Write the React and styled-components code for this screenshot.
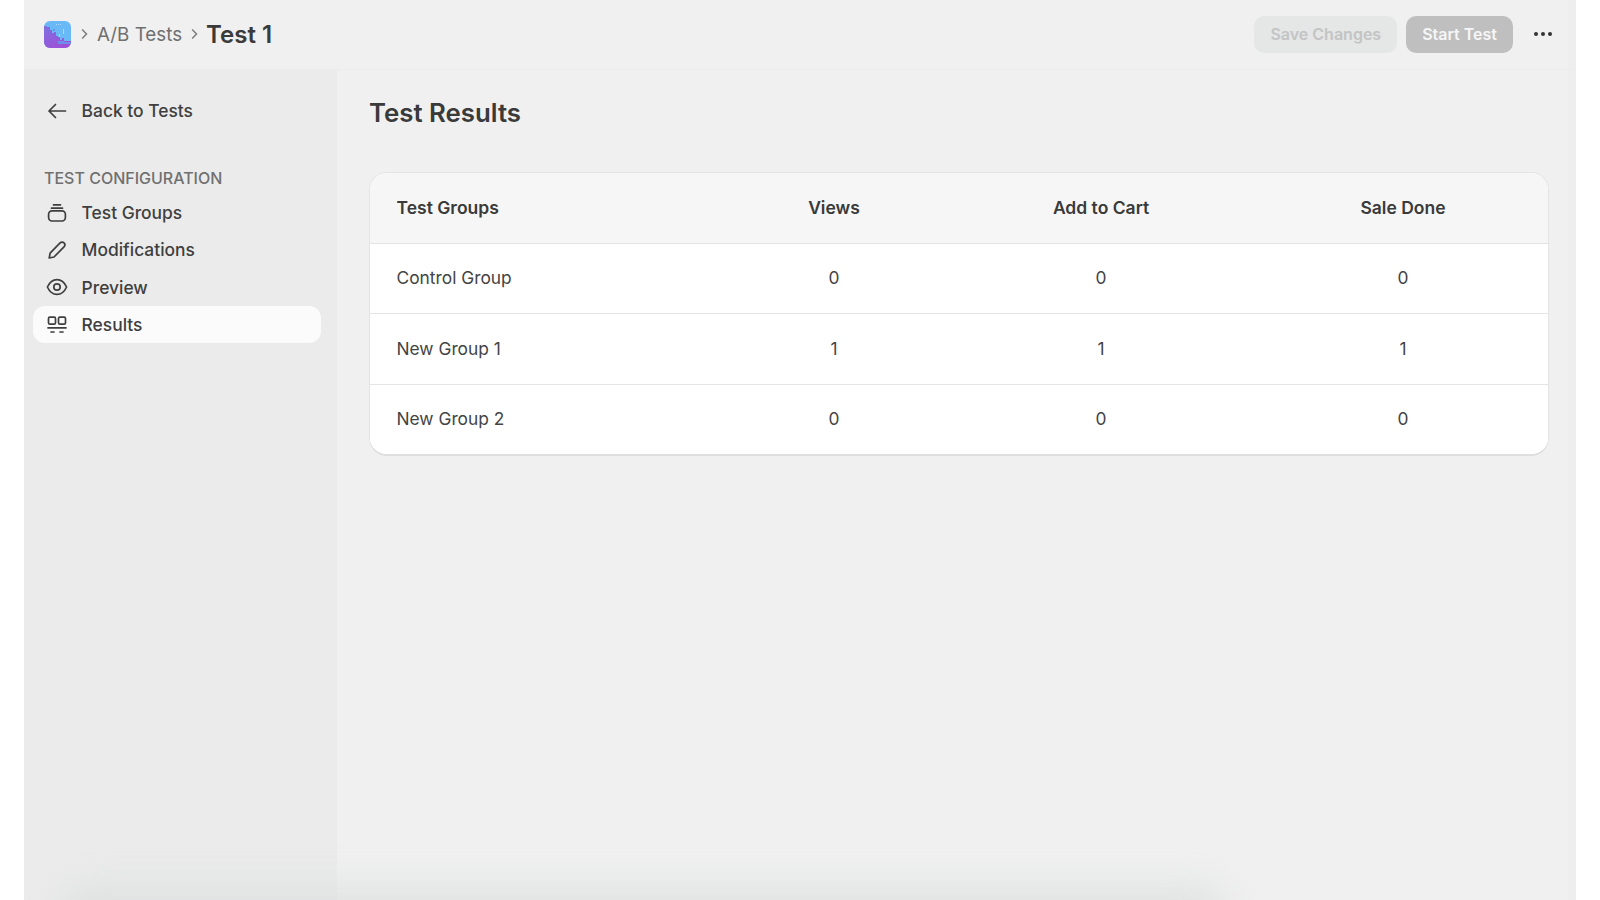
import React from 'react'
import styled, { createGlobalStyle } from 'styled-components'

const GlobalStyle = createGlobalStyle`
  html, body {
    margin: 0;
    background: #ffffff;
    font-family: Inter, "Liberation Sans", sans-serif;
    color: #3a3a3a;
  }
`

const Page = styled.div`
  position: relative;
  box-sizing: border-box;
  width: 1552px;
  height: 900px;
  margin-left: 24px;
  background: #f0f0f0;
  overflow: hidden;
  display: flex;
  flex-direction: column;
`

const TopBar = styled.header`
  box-sizing: border-box;
  height: 70px;
  flex: none;
  display: flex;
  align-items: center;
  padding: 0 23px 1px 20px;
  border-bottom: 1px solid #ebebeb;
`

const Crumbs = styled.nav`
  display: flex;
  align-items: center;
  flex: 1;
`

const Separator = styled.span`
  display: flex;
  margin: ${p => (p.$tight ? '0 8px 0 9px' : '0 9px 0 10px')};
`

const CrumbLink = styled.span`
  font-size: 18.8px;
  color: #6f6f6f;
`

const CrumbTitle = styled.h1`
  font-size: 24px;
  font-weight: 600;
  margin: 0;
  color: #3a3a3a;
`

const Actions = styled.div`
  display: flex;
  align-items: center;
  gap: 9px;
`

const ActionButton = styled.button`
  height: 37px;
  padding: 0 16px;
  border: none;
  border-radius: 10px;
  font-family: inherit;
  font-size: 16px;
  font-weight: 600;
  background: ${p => (p.$primary ? '#bfbfbf' : '#e5e6e6')};
  color: ${p => (p.$primary ? '#f6f6f6' : '#c3c4c4')};
`

const MoreButton = styled.div`
  display: flex;
  align-items: center;
  margin-left: 11px;
`

const Body = styled.div`
  flex: 1;
  display: flex;
  min-height: 0;
`

const Sidebar = styled.aside`
  box-sizing: border-box;
  width: 313px;
  flex: none;
  background: #ebebeb;
  padding: 22px 16px 0 9px;
`

const SideRow = styled.div`
  display: flex;
  align-items: center;
  gap: 12.6px;
  height: 37px;
  padding-left: 12px;
  border-radius: 12px;
  font-size: 17.4px;
  font-weight: 500;
  color: #3f3f3f;
  background: ${p => (p.$active ? '#fbfbfb' : 'transparent')};
  margin-bottom: ${p => (p.$back ? '39px' : '0.4px')};
`

const SideLabel = styled.div`
  font-size: 16px;
  font-weight: 500;
  color: #707070;
  padding-left: 11px;
  margin-bottom: 6px;
  line-height: 20px;
`

const IconBox = styled.span`
  width: 24px;
  height: 24px;
  flex: none;
  display: flex;
  align-items: center;
  justify-content: center;
`

const Main = styled.main`
  flex: 1;
  padding: 25px 27px 0 32px;
`

const Heading = styled.h2`
  font-size: 25.8px;
  font-weight: 600;
  line-height: 36px;
  margin: 0 0 41px;
  color: #3a3a3a;
`

const Card = styled.section`
  border: 1px solid #e4e4e4;
  border-bottom: 2px solid #dedede;
  border-radius: 18px;
  background: #ffffff;
  overflow: hidden;
`

const Row = styled.div`
  display: grid;
  grid-template-columns: 354px 220px 314px 1fr;
  align-items: center;
  height: 68.5px;
  padding-bottom: 1px;
  font-size: ${p => (p.$head ? '17.5px' : '17.35px')};
  font-weight: ${p => (p.$head ? 600 : 400)};
  color: ${p => (p.$head ? '#3a3a3a' : '#444444')};
  background: ${p => (p.$head ? '#f6f6f6' : '#ffffff')};
  border-bottom: ${p => (p.$last ? 'none' : '1px solid #e4e4e4')};
`

const NameCell = styled.div`
  padding-left: 26.5px;
`

const Cell = styled.div`
  text-align: center;
`

const EdgeShade = styled.div`
  position: absolute;
  top: 0;
  right: 0;
  bottom: 0;
  width: 8px;
  background: #ececec;
  opacity: 0.6;
`

const BottomShade = styled.div`
  position: absolute;
  left: 35px;
  width: 1170px;
  bottom: -34px;
  height: 46px;
  border-radius: 30px;
  background: #d8dcdc;
  filter: blur(20px);
  opacity: 0.75;
`

const Logo = () => (
  <svg width="27" height="27" viewBox="0 0 27 27">
    <defs>
      <linearGradient id="logoPurple" x1="0" y1="0" x2="0.7" y2="1">
        <stop offset="0" stopColor="#7d70e0" />
        <stop offset="1" stopColor="#a04fd6" />
      </linearGradient>
      <clipPath id="logoClip">
        <rect width="27" height="27" rx="6" />
      </clipPath>
    </defs>
    <g clipPath="url(#logoClip)">
      <rect width="27" height="27" fill="#69b9f6" />
      <path
        d="M0 5h3v1h3v3h2v3h2v-1h2v4h2v1h2v3h2v-2h2v3h7v7H0z"
        fill="url(#logoPurple)"
      />
      <path d="M14 20h6v1h7v2H14zM9 8h2v2H9z" fill="#6e8fe8" />
      <path d="M12 3h1v1h-1zM14 3h1v1h-1zM16 3h1v1h-1zM19 8h1v5h-1zM15 13h1v3h-1z" fill="#a9d6fa" />
    </g>
  </svg>
)

const Chevron = () => (
  <svg width="7" height="12" viewBox="0 0 7 12" fill="none">
    <path d="M1.2 1.5 5.5 6l-4.3 4.5" stroke="#7c7c7c" strokeWidth="1.5" />
  </svg>
)

const Stroke = ({ children }) => (
  <svg width="22" height="22" viewBox="0 0 22 22" fill="none" stroke="#3f3f3f" strokeWidth="1.7" strokeLinecap="round" strokeLinejoin="round">
    {children}
  </svg>
)

const BackIcon = () => (
  <Stroke>
    <path d="M19.5 11H3M9.5 4.5 3 11l6.5 6.5" />
  </Stroke>
)

const GroupsIcon = () => (
  <Stroke>
    <path d="M7.5 2.800h7M5.500 6.200h11" />
    <rect x="2.600" y="8.800" width="16.800" height="10.200" rx="3.400" />
  </Stroke>
)

const PencilIcon = () => (
  <Stroke>
    <path d="M3.200 19l.9-4.800L14.100 3.900a2.700 2.700 0 0 1 3.900 3.900L8 18z" />
  </Stroke>
)

const EyeIcon = () => (
  <Stroke>
    <path d="M1.400 11C3.800 5.700 7 3.600 11 3.600s7.200 2.100 9.600 7.400c-2.400 5.300-5.600 7.400-9.600 7.400s-7.200-2.100-9.600-7.400z" />
    <circle cx="11" cy="11" r="3.200" />
  </Stroke>
)

const ResultsIcon = () => (
  <Stroke>
    <rect x="2.500" y="3.200" width="7" height="7" rx="1.400" />
    <rect x="12.500" y="3.200" width="7" height="7" rx="1.400" />
    <path d="M2 13.800h18M5 18h3M14 18h3" />
  </Stroke>
)

const MoreIcon = () => (
  <svg width="20" height="6" viewBox="0 0 20 6" fill="#333333">
    <circle cx="3" cy="3" r="2" />
    <circle cx="10" cy="3" r="2" />
    <circle cx="17" cy="3" r="2" />
  </svg>
)

const navItems = [
  { label: 'Test Groups', icon: <GroupsIcon /> },
  { label: 'Modifications', icon: <PencilIcon /> },
  { label: 'Preview', icon: <EyeIcon /> },
  { label: 'Results', icon: <ResultsIcon />, active: true }
]

const results = [
  { name: 'Control Group', views: 0, cart: 0, sale: 0 },
  { name: 'New Group 1', views: 1, cart: 1, sale: 1 },
  { name: 'New Group 2', views: 0, cart: 0, sale: 0 }
]

export default function App() {
  return (
    <>
      <GlobalStyle />
      <Page>
        <TopBar>
          <Crumbs>
            <Logo />
            <Separator>
              <Chevron />
            </Separator>
            <CrumbLink>A/B Tests</CrumbLink>
            <Separator $tight>
              <Chevron />
            </Separator>
            <CrumbTitle>Test 1</CrumbTitle>
          </Crumbs>
          <Actions>
            <ActionButton>Save Changes</ActionButton>
            <ActionButton $primary>Start Test</ActionButton>
            <MoreButton>
              <MoreIcon />
            </MoreButton>
          </Actions>
        </TopBar>
        <Body>
          <Sidebar>
            <SideRow $back>
              <IconBox>
                <BackIcon />
              </IconBox>
              Back to Tests
            </SideRow>
            <SideLabel>TEST CONFIGURATION</SideLabel>
            {navItems.map(item => (
              <SideRow key={item.label} $active={item.active}>
                <IconBox>{item.icon}</IconBox>
                {item.label}
              </SideRow>
            ))}
          </Sidebar>
          <Main>
            <Heading>Test Results</Heading>
            <Card>
              <Row $head>
                <NameCell>Test Groups</NameCell>
                <Cell>Views</Cell>
                <Cell>Add to Cart</Cell>
                <Cell>Sale Done</Cell>
              </Row>
              {results.map((r, i) => (
                <Row key={r.name} $last={i === results.length - 1}>
                  <NameCell>{r.name}</NameCell>
                  <Cell>{r.views}</Cell>
                  <Cell>{r.cart}</Cell>
                  <Cell>{r.sale}</Cell>
                </Row>
              ))}
            </Card>
          </Main>
        </Body>
        <EdgeShade />
        <BottomShade />
      </Page>
    </>
  )
}
